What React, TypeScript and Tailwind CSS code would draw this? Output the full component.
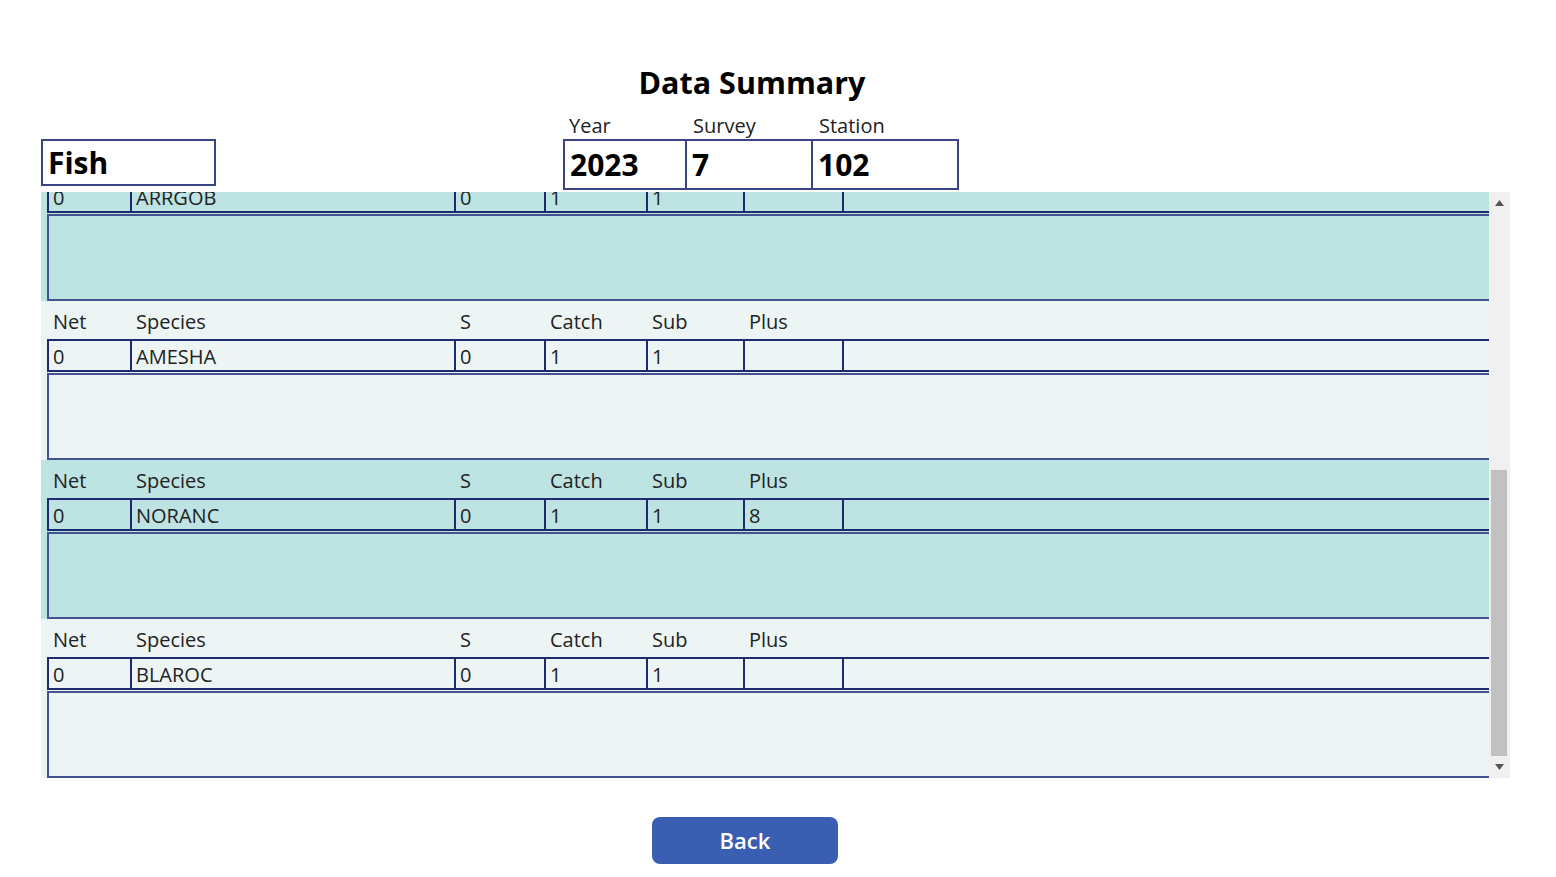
import React from "react";

type Row = {
	net: string;
	species: string;
	s: string;
	catchCount: string;
	sub: string;
	plus: string;
	teal: boolean;
};

const rows: Row[] = [
	{ net: "0", species: "ARRGOB", s: "0", catchCount: "1", sub: "1", plus: "", teal: true },
	{ net: "0", species: "AMESHA", s: "0", catchCount: "1", sub: "1", plus: "", teal: false },
	{ net: "0", species: "NORANC", s: "0", catchCount: "1", sub: "1", plus: "8", teal: true },
	{ net: "0", species: "BLAROC", s: "0", catchCount: "1", sub: "1", plus: "", teal: false },
];

const cols = [
	{ label: "Net", w: "w-[83px]" },
	{ label: "Species", w: "w-[324px]" },
	{ label: "S", w: "w-[90px]" },
	{ label: "Catch", w: "w-[102px]" },
	{ label: "Sub", w: "w-[97px]" },
	{ label: "Plus", w: "w-[99px]" },
];

function GalleryItem({ row }: { row: Row }) {
	const values = [row.net, row.species, row.s, row.catchCount, row.sub, row.plus];
	return (
		<div className={`h-[159px] w-[1448px] pl-[6px] ${row.teal ? "bg-[#bde3e2]" : "bg-[#ecf5f4]"}`}>
			<div className="flex h-[38px] items-center pt-[4px]">
				{cols.map((c) => (
					<div key={c.label} className={`${c.w} pl-[6px] text-[20px] text-[#222]`}>
						{c.label}
					</div>
				))}
			</div>
			<div className="flex h-[33px] w-[1446px] border-y-2 border-[#1e2a6e]">
				{cols.map((c, i) => (
					<div
						key={c.label}
						className={`${c.w} flex items-center border-l-2 border-[#1e2a6e] pl-[4px] pt-[2px] text-[20px] text-[#222]`}
					>
						{values[i]}
					</div>
				))}
				<div className="flex-1 border-l-2 border-[#1e2a6e]" />
			</div>
			<div className="mt-[1px] h-[87px] w-[1446px] border-2 border-r-0 border-[#44528f]" />
		</div>
	);
}

export default function App() {
	return (
		<div className="relative h-[877px] w-[1556px] overflow-hidden bg-white font-['Open_Sans',sans-serif] text-[#111]">
			<div className="flex justify-center pr-[52px] pt-[61px]">
				<h1 className="text-[30.5px] font-bold leading-[42px] text-black">Data Summary</h1>
			</div>

			<div className="mt-[9px] flex items-start pl-[41px]">
				<div className="mt-[27px] flex h-[47px] w-[175px] items-center border-2 border-[#3b4583] pl-[5px] text-[30px] font-bold text-black">
					Fish
				</div>
				<div className="ml-[347px] flex">
					{[
						{ label: "Year", value: "2023", w: "w-[124px]", first: true },
						{ label: "Survey", value: "7", w: "w-[126px]", first: false },
						{ label: "Station", value: "102", w: "w-[146px]", first: false },
					].map((f) => (
						<div key={f.label} className={f.w}>
							<div className="flex h-[27px] items-center pl-[6px] text-[20px] text-[#222]">{f.label}</div>
							<div
								className={`flex h-[51px] items-center border-2 border-[#3b4583] pl-[5px] text-[30px] font-bold text-black ${
									f.first ? "" : "border-l-0"
								}`}
							>
								{f.value}
							</div>
						</div>
					))}
				</div>
			</div>

			<div className="ml-[41px] mt-[2px] flex h-[586px] w-[1469px]">
				<div className="h-full w-[1448px] overflow-hidden">
					<div className="-mt-[50px]">
						{rows.map((r) => (
							<GalleryItem key={r.species} row={r} />
						))}
					</div>
				</div>
				<div className="flex h-full w-[21px] flex-col bg-[#f0f0f0]">
					<div className="flex h-[22px] items-center justify-center">
						<svg width="9" height="6" viewBox="0 0 9 6">
							<path d="M4.5 0 L9 6 L0 6 Z" fill="#555" />
						</svg>
					</div>
					<div className="flex flex-1 flex-col justify-end">
						<div className="mx-[2px] h-[286px] w-[16px] bg-[#c1c1c1]" />
					</div>
					<div className="flex h-[22px] items-center justify-center">
						<svg width="9" height="6" viewBox="0 0 9 6">
							<path d="M0 0 L9 0 L4.5 6 Z" fill="#555" />
						</svg>
					</div>
				</div>
			</div>

			<div className="ml-[652px] mt-[39px]">
				<button
					type="button"
					className="flex h-[47px] w-[186px] items-center justify-center rounded-[8px] bg-[#3a5fb2] text-[22px] font-semibold text-white"
				>
					Back
				</button>
			</div>
		</div>
	);
}
